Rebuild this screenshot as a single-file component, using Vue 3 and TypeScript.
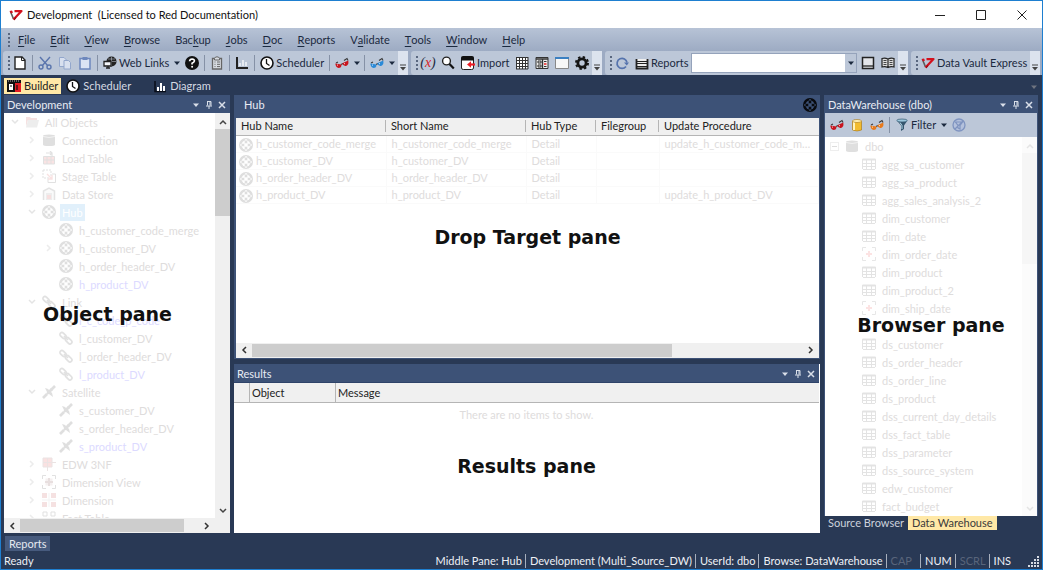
<script setup lang="ts">
import { ref } from 'vue'

interface TreeRow {
  label: string
  icon: string
  level: number
  arrow?: 'open' | 'closed'
  selected?: boolean
  link?: boolean
}

interface HubRow {
  name: string
  type: string
  procedure: string
}

const menus = [
  ['', 'F', 'ile'], ['', 'E', 'dit'], ['', 'V', 'iew'], ['', 'B', 'rowse'],
  ['Bac', 'k', 'up'], ['', 'J', 'obs'], ['', 'D', 'oc'], ['', 'R', 'eports'],
  ['V', 'a', 'lidate'], ['', 'T', 'ools'], ['', 'W', 'indow'], ['', 'H', 'elp'],
]

const objects: TreeRow[] = [
  { label: 'All Objects', icon: 'folder', level: 0, arrow: 'open' },
  { label: 'Connection', icon: 'db', level: 1, arrow: 'closed' },
  { label: 'Load Table', icon: 'load', level: 1, arrow: 'closed' },
  { label: 'Stage Table', icon: 'stage', level: 1, arrow: 'closed' },
  { label: 'Data Store', icon: 'store', level: 1, arrow: 'closed' },
  { label: 'Hub', icon: 'hub', level: 1, arrow: 'open', selected: true },
  { label: 'h_customer_code_merge', icon: 'hub', level: 2 },
  { label: 'h_customer_DV', icon: 'hub', level: 2, arrow: 'closed' },
  { label: 'h_order_header_DV', icon: 'hub', level: 2 },
  { label: 'h_product_DV', icon: 'hub', level: 2, link: true },
  { label: 'Link', icon: 'chain', level: 1, arrow: 'open' },
  { label: 'l_c_code_p_code', icon: 'chain', level: 2, link: true },
  { label: 'l_customer_DV', icon: 'chain', level: 2 },
  { label: 'l_order_header_DV', icon: 'chain', level: 2 },
  { label: 'l_product_DV', icon: 'chain', level: 2, link: true },
  { label: 'Satellite', icon: 'sat', level: 1, arrow: 'open' },
  { label: 's_customer_DV', icon: 'sat', level: 2 },
  { label: 's_order_header_DV', icon: 'sat', level: 2 },
  { label: 's_product_DV', icon: 'sat', level: 2, link: true },
  { label: 'EDW 3NF', icon: 'edw', level: 1, arrow: 'closed' },
  { label: 'Dimension View', icon: 'dimview', level: 1, arrow: 'closed' },
  { label: 'Dimension', icon: 'dim', level: 1, arrow: 'closed' },
  { label: 'Fact Table', icon: 'fact', level: 1, arrow: 'closed' },
]

const tables = [
  'agg_sa_customer', 'agg_sa_product', 'agg_sales_analysis_2', 'dim_customer',
  'dim_date', 'dim_order_date', 'dim_product', 'dim_product_2', 'dim_ship_date', '',
  'ds_customer', 'ds_order_header', 'ds_order_line', 'ds_product',
  'dss_current_day_details', 'dss_fact_table', 'dss_parameter',
  'dss_source_system', 'edw_customer', 'fact_budget',
]
const views = ['dim_order_date', 'dim_ship_date']

const hubs: HubRow[] = [
  { name: 'h_customer_code_merge', type: 'Detail', procedure: 'update_h_customer_code_merge' },
  { name: 'h_customer_DV', type: 'Detail', procedure: '' },
  { name: 'h_order_header_DV', type: 'Detail', procedure: '' },
  { name: 'h_product_DV', type: 'Detail', procedure: 'update_h_product_DV' },
]

const report = ref('')
</script>

<template>
  <svg class="defs" aria-hidden="true">
    <symbol id="logo" viewBox="0 0 14 14">
      <path d="M1.500 3.500L4.500 11" stroke="#5c5c5c" stroke-width="1.600" fill="none" />
      <path d="M.5 3L3 2.500L4 4.500L2 5.500Z" fill="#d3101c" />
      <path d="M5.500 3.200L12.500 3L4.500 11.500" fill="none" stroke="#d3101c" stroke-width="2.200" stroke-linejoin="round" />
      <path d="M5 12L7 9.500" stroke="#8b0b14" stroke-width="1.200" />
    </symbol>
    <symbol id="page" viewBox="0 0 14 14"><path d="M2 1H9L12 4V13H2Z" fill="#fff" stroke="#222" stroke-width="1.4" /><path d="M8.500 1V4.500H12" fill="none" stroke="#222" /></symbol>
    <symbol id="cut" viewBox="0 0 14 14"><g fill="none" stroke="#5a75ad" stroke-width="1.4"><path d="M2 1L10 10M12 1L4 10" /><circle cx="3" cy="11" r="2" /><circle cx="11" cy="11" r="2" /></g></symbol>
    <symbol id="copy" viewBox="0 0 14 14"><g fill="#d8e0ef" stroke="#93a7cc"><path d="M1.500 1.500H6L8 3.500V10.500H1.500Z" /><path d="M6 4.500H10.500L12.500 6.500V13H6Z" /></g></symbol>
    <symbol id="paste" viewBox="0 0 14 14"><path d="M2 2.500H12V13H2Z" fill="#dce4f4" stroke="#6e88bd" stroke-width="1.500" /><path d="M4.500 1H9.500V4H4.500Z" fill="#6e88bd" /></symbol>
    <symbol id="globe" viewBox="0 0 14 14"><circle cx="8.500" cy="5.500" r="5" fill="#222" /><path d="M4 5.500H13M8.500 1V10M5 3H12" stroke="#ccd4e0" stroke-width=".5" fill="none" /><path d="M1 5.500H8V10H1Z" fill="#f4f6fa" stroke="#222" stroke-width="1.300" /><path d="M3 12H7M5 10V12" stroke="#222" stroke-width="1.300" /></symbol>
    <symbol id="help" viewBox="0 0 14 14"><circle cx="7" cy="7" r="7" fill="#111" /><path d="M4.600 5.300Q4.800 3 7.100 3Q9.500 3.100 9.400 5Q9.300 6.200 7.100 7.300V8.500" fill="none" stroke="#fff" stroke-width="1.700" /><circle cx="7.100" cy="10.800" r="1" fill="#fff" /></symbol>
    <symbol id="clip" viewBox="0 0 14 14"><path d="M2.500 2.500H11.500V13H2.500Z" fill="#d8dce2" stroke="#666" stroke-width="1.300" /><path d="M4.500 2.500Q5 .8 7 .8T9.500 2.500V4H4.500Z" fill="#d8dce2" stroke="#666" /><path d="M4.500 6H5.500M7 6H10M4.500 8.300H5.500M7 8.300H10M4.500 10.600H5.500M7 10.600H10" stroke="#666" /></symbol>
    <symbol id="axis" viewBox="0 0 14 14"><path d="M2 1V12H13" fill="none" stroke="#222" stroke-width="2" /><path d="M5 7V10M8 4V10M11 6V10" stroke="#e6ebf2" stroke-width="2" /></symbol>
    <symbol id="clock" viewBox="0 0 14 14"><circle cx="7" cy="7" r="6" fill="#fff" stroke="#111" stroke-width="1.600" /><path d="M6.500 3V7.500L9.500 9.500" fill="none" stroke="#111" stroke-width="1.300" /></symbol>
    <symbol id="glasses" viewBox="0 0 14 14"><path d="M1 7L3 6M6 8.500L8 7.500M9 4.500L12 2.500L13 4.500" fill="none" stroke="#3a3a3a" stroke-width="1.100" /><path d="M.3 7.500L6.500 8.500Q6.500 12 3.500 12Q.8 11.500 .3 7.500Z" fill="currentColor" /><path d="M7.300 7.200L13.300 4.500Q14 9 11 10Q8 10.500 7.300 7.200Z" fill="currentColor" /><path d="M2 9L3 9.200M9 7.900L10 7.400" stroke="#fff" stroke-width=".8" /></symbol>
    <symbol id="search" viewBox="0 0 14 14"><circle cx="5.500" cy="5" r="3.900" fill="#fff" stroke="#222" stroke-width="1.400" /><path d="M8.500 8L12.800 12.500" stroke="#111" stroke-width="2.200" /></symbol>
    <symbol id="import" viewBox="0 0 14 14"><path d="M.5 3V12Q.5 13.500 2.500 13.500H10.500Q12.500 13.500 12.500 12V3Z" fill="#fff" stroke="#222" /><path d="M0 1.500Q0 0 2 0H11Q13 0 13 1.500V4.500H0Z" fill="#111" /><path d="M14 8.500H9" stroke="#ed1c24" stroke-width="2.200" /><path d="M6 8.500L10 5.300V11.700Z" fill="#ed1c24" /></symbol>
    <symbol id="grid" viewBox="0 0 14 14"><path d="M1.500 1.500H12.500V12.500H1.500Z" fill="#fff" /><path d="M1.500 1V13M4.500 1V13M7.500 1V13M10.500 1V13M13 1V13M1 1.500H13M1 4.500H13M1 7.500H13M1 10.500H13M1 13H13" stroke="#333" stroke-width="1" /></symbol>
    <symbol id="table" viewBox="0 0 14 14"><path d="M.5 6.500H13.500M.5 9.500H13.500M1 12.500H13M.5 2V12M4.500 3V12M9.500 3V12M13.500 2V12" stroke="#222" fill="none" /><path d="M.5 1.500H13.500V3.500H.5Z" fill="#222" /></symbol>
    <symbol id="form" viewBox="0 0 14 14"><path d="M1 1.500H13V12.500H1Z" fill="#eee" stroke="#333" /><path d="M1 3H13M7.500 3V12.500" stroke="#333" stroke-width="1.400" /><path d="M3 5H6V7H3ZM3 9H6V11H3Z" fill="none" stroke="#333" /><path d="M9 5.500H11.500M9 10.500H11.500" stroke="#333" /><path d="M9 8H11.500" stroke="#e22" stroke-width="1.500" /></symbol>
    <symbol id="window" viewBox="0 0 14 14"><path d="M.5 1.500H13.500V12.500H.5Z" fill="#f7f7f7" stroke="#888" /><path d="M0 2H14" stroke="#3b80c2" stroke-width="2" /></symbol>
    <symbol id="gear" viewBox="0 0 14 14"><circle cx="7" cy="7" r="4.100" fill="none" stroke="#151515" stroke-width="2.800" /><circle cx="7" cy="7" r="6" fill="none" stroke="#151515" stroke-width="2" stroke-dasharray="2.400 2.310" /></symbol>
    <symbol id="refresh" viewBox="0 0 14 14"><path d="M11 10.500A5 5 0 1 1 12 6.500" fill="none" stroke="#5573ad" stroke-width="1.700" /><path d="M9 6.500H14L11.800 9.500Z" fill="#5573ad" /></symbol>
    <symbol id="report" viewBox="0 0 14 14"><path d="M1.500 3V12.500H12.500V3" fill="#eee" stroke="#222" stroke-width="1.800" /><path d="M2 5.500H12M2 7.500H12M2 10.500H12" stroke="#222" stroke-width="1" /></symbol>
    <symbol id="book" viewBox="0 0 14 14"><path d="M1.500 1.500H12.500V12.500H1.500Z" fill="#e3e5e9" stroke="#222" stroke-width="1.500" /><path d="M1.500 10H12.500" stroke="#222" stroke-width="1.300" /></symbol>
    <symbol id="openbook" viewBox="0 0 14 14"><path d="M7 3Q4 1.500 1 2.500V11Q4 10 7 11.500Q10 10 13 11V2.500Q10 1.500 7 3V11.500" fill="#ddd" stroke="#222" stroke-width="1.200" /><path d="M2.500 4.500H5.500M2.500 6.500H5.500M2.500 8.500H5.500M8.500 4.500H11.500M8.500 6.500H11.500M8.500 8.500H11.500" stroke="#444" /></symbol>
    <symbol id="builder" viewBox="0 0 14 14"><path d="M0 1H14V13H0Z" fill="#111" /><path d="M1 2H13" stroke="#fff" stroke-width=".7" stroke-dasharray="1 1" /><path d="M2 5H6V11H2Z" fill="#fff" /><path d="M8 4H14V13H8Z" fill="#e31b23" /><path d="M3 7H5M10 6V11" stroke="#111" stroke-width="1.200" /></symbol>
    <symbol id="bars" viewBox="0 0 14 14"><path d="M2 2V12.500H13" fill="none" stroke="#080d18" stroke-width="1.500" /><path d="M5 8V12M8 4V12M11 7V12" stroke="#fff" stroke-width="2" /></symbol>
    <symbol id="hub" viewBox="0 0 14 14"><circle cx="7" cy="7" r="7" fill="currentColor" /><circle cx="7" cy="7" r="4.500" class="ring" /><path d="M7 1V13M1 7H13" stroke="currentColor" stroke-width="2.600" /><path d="M5.300 5.300H8.700V8.700H5.300Z" class="hole" /><path d="M7 .8L8.500 2.500H5.500ZM7 13.200L8.500 11.500H5.500ZM.8 7L2.500 5.500V8.500ZM13.200 7L11.500 5.500V8.500Z" class="hole" /></symbol>
    <symbol id="folder" viewBox="0 0 14 14"><path d="M1 2H5L6 3H12V5H3L1 12Z" fill="#b33" /><path d="M3 5H14L12 12.500H1Z" fill="#888" /></symbol>
    <symbol id="db" viewBox="0 0 14 14"><path d="M1 3V11.500Q1 13 7 13T13 11.500V3Q13 1.500 7 1.500T1 3Z" fill="currentColor" /><path d="M1 3.500Q7 5.500 13 3.500" fill="none" stroke="#fff" stroke-width=".6" /></symbol>
    <symbol id="load" viewBox="0 0 14 14"><path d="M1.500 5.500H12.500V13H1.500ZM5 5.500V13M9 5.500V13M1.500 9H12.500" fill="#d44" stroke="#333" /><path d="M4 2H10M8 0L10 2L8 4M10 2V6" fill="none" stroke="#333" stroke-width="1.200" /></symbol>
    <symbol id="stage" viewBox="0 0 14 14"><path d="M1 1H9V9H1Z" fill="none" stroke="#333" stroke-dasharray="2 1" /><path d="M10 5H13.500V13.500H6V10" fill="none" stroke="#333" /><path d="M5 5L10 10M10 6V10H6" fill="none" stroke="#d33" stroke-width="1.300" /></symbol>
    <symbol id="store" viewBox="0 0 14 14"><path d="M1.500 13V4L7 1L12.500 4V13" fill="#ddd" stroke="#444" stroke-width="1.500" /><path d="M4 6H10V13H4Z" fill="#888" /><path d="M5 8H9V12H5Z" fill="#c22" /></symbol>
    <symbol id="chain" viewBox="0 0 14 14"><g fill="none" stroke="#333" stroke-width="1.700"><rect x=".5" y="2.500" width="7" height="4" rx="2" transform="rotate(45 4 4.500)" /><rect x="6" y="7.500" width="7.500" height="4" rx="2" transform="rotate(45 9.500 9.500)" /><path d="M5 5L9 9" /></g></symbol>
    <symbol id="sat" viewBox="0 0 14 14"><path d="M1 13L5 9M9 5L13 1" stroke="#222" stroke-width="2.600" /><path d="M3 3L6 4L10 8L11 12L7 9L4 10L5 7Z M7 5L9 3L11 5L9 7Z" fill="#222" /></symbol>
    <symbol id="edw" viewBox="0 0 14 14"><path d="M1 1H10V10H1Z" fill="#d33" stroke="#744" /><path d="M5.500 1V14M1 5.500H14" stroke="#744" /></symbol>
    <symbol id="dimview" viewBox="0 0 14 14"><path d="M.5 4V.5H4M10 .5H13.500V4M13.500 10V13.500H10M4 13.500H.5V10" fill="none" stroke="#333" /><path d="M3.500 3.500H10.500V10.500H3.500Z" fill="#b99" /><path d="M7 3V11M3 7H11" stroke="#622" stroke-width="2" /></symbol>
    <symbol id="dim" viewBox="0 0 14 14"><path d="M0 0H5V5H0ZM9 0H14V5H9ZM0 9H5V14H0ZM9 9H14V14H9Z" fill="#b33" /><path d="M7 0V14M0 7H14" stroke="#999" stroke-width=".7" /></symbol>
    <symbol id="fact" viewBox="0 0 14 14"><path d="M1 1H5V5H1ZM9 1H13V5H9ZM1 9H5V13H1ZM9 9H13V13H9Z" fill="none" stroke="#333" /></symbol>
    <symbol id="view" viewBox="0 0 14 14"><path d="M.5 4V.5H4M10 .5H13.500V4M13.500 10V13.500H10M4 13.500H.5V10" fill="none" stroke="#444" /><path d="M7 4V10M4 7H10" stroke="#e22" stroke-width="2" /></symbol>
    <symbol id="cylinder" viewBox="0 0 14 14"><path d="M2.500 3V12Q7 14 11.500 12V3Z" fill="#f2bc2d" stroke="#a6720d" stroke-width=".6" /><path d="M4 4V12" stroke="#fff3bc" stroke-width="2" /><ellipse cx="7" cy="3" rx="4.500" ry="1.500" fill="#fff0b3" stroke="#a6720d" stroke-width=".6" /></symbol>
    <symbol id="funnel" viewBox="0 0 14 14"><path d="M2 2.500L6 7.500V13L9 11V7.500L12.500 2.500Z" fill="#35566e" /><ellipse cx="7" cy="2.500" rx="5.300" ry="1.500" fill="#9cc7dd" stroke="#35566e" stroke-width=".7" /><path d="M5 4.500L7 7.500V11" stroke="#b9dcec" fill="none" /></symbol>
    <symbol id="nofilter" viewBox="0 0 14 14"><circle cx="7" cy="7" r="6" fill="#b4c1dc" stroke="#7f94c0" stroke-width="1.300" /><path d="M3.500 4H10.500L8 7.500V11L6 10V7.500ZM3 11L11 3" fill="none" stroke="#7f94c0" stroke-width="1.200" /></symbol>
    <symbol id="down" viewBox="0 0 8 8"><path d="M1 2.500H7L4 6Z" fill="currentColor" /></symbol>
    <symbol id="pin" viewBox="0 0 8 8"><path d="M2 .5H6M2.500 .5V4.500M5 .5V4.500M6 .5V4.500M1 5H7M4 5V8" fill="none" stroke="currentColor" /></symbol>
    <symbol id="close" viewBox="0 0 8 8"><path d="M1 1L7 7M7 1L1 7" stroke="currentColor" stroke-width="1.500" /></symbol>
    <symbol id="chev" viewBox="0 0 8 8"><path d="M2 1L5 4L2 7" fill="none" stroke="currentColor" stroke-width="1.500" /></symbol>
    <symbol id="overflow" viewBox="0 0 8 8"><path d="M1 1H7" stroke="#444" /><path d="M1 3H7L4 6.500Z" fill="#444" /></symbol>
  </svg>

  <div class="app">
    <header class="title">
      <svg class="ic"><use href="#logo" /></svg>
      <h1>Development&nbsp; (Licensed to Red Documentation)</h1>
      <div class="winbtns">
        <button aria-label="Minimize"><svg viewBox="0 0 10 10"><path d="M0 5.500H10" /></svg></button>
        <button aria-label="Maximize"><svg viewBox="0 0 10 10"><path d="M.5 .5H9.500V9.500H.5Z" /></svg></button>
        <button aria-label="Close"><svg viewBox="0 0 10 10"><path d="M.5 .5L9.500 9.500M9.500 .5L.5 9.500" /></svg></button>
      </div>
    </header>

    <nav class="menu">
      <i class="grip"></i>
      <button v-for="m in menus" :key="m.join('')">{{ m[0] }}<u>{{ m[1] }}</u>{{ m[2] }}</button>
    </nav>

    <div class="bars">
      <div class="bar main">
        <i class="grip"></i>
        <button aria-label="New"><svg class="ic"><use href="#page" /></svg></button>
        <i class="sep"></i>
        <button aria-label="Cut"><svg class="ic"><use href="#cut" /></svg></button>
        <button aria-label="Copy"><svg class="ic"><use href="#copy" /></svg></button>
        <button aria-label="Paste"><svg class="ic"><use href="#paste" /></svg></button>
        <i class="sep"></i>
        <button class="text"><svg class="ic"><use href="#globe" /></svg>Web Links</button>
        <button class="drop" aria-label="Web link list"><svg class="sm"><use href="#down" /></svg></button>
        <button aria-label="Help"><svg class="ic"><use href="#help" /></svg></button>
        <i class="sep"></i>
        <button aria-label="Clipboard"><svg class="ic"><use href="#clip" /></svg></button>
        <i class="sep"></i>
        <button aria-label="Chart"><svg class="ic"><use href="#axis" /></svg></button>
        <i class="sep"></i>
        <button class="text"><svg class="ic"><use href="#clock" /></svg>Scheduler</button>
        <i class="sep"></i>
        <button class="red" aria-label="Browse source"><svg class="ic"><use href="#glasses" /></svg></button>
        <button class="drop" aria-label="Source list"><svg class="sm"><use href="#down" /></svg></button>
        <i class="sep"></i>
        <button class="blue" aria-label="Browse warehouse"><svg class="ic"><use href="#glasses" /></svg></button>
        <button class="drop" aria-label="Warehouse list"><svg class="sm"><use href="#down" /></svg></button>
        <button class="flap" aria-label="Toolbar options"><svg class="sm"><use href="#overflow" /></svg></button>
      </div>
      <div class="bar tools">
        <i class="grip"></i>
        <button class="param" aria-label="Parameters">(<em>x</em>)</button>
        <button aria-label="Search"><svg class="ic"><use href="#search" /></svg></button>
        <button class="text"><svg class="ic"><use href="#import" /></svg>Import</button>
        <button aria-label="Grid"><svg class="ic"><use href="#grid" /></svg></button>
        <button aria-label="Form"><svg class="ic"><use href="#form" /></svg></button>
        <button aria-label="Window"><svg class="ic"><use href="#window" /></svg></button>
        <button aria-label="Settings"><svg class="ic"><use href="#gear" /></svg></button>
        <button class="flap" aria-label="Toolbar options"><svg class="sm"><use href="#overflow" /></svg></button>
      </div>
      <div class="bar reports">
        <i class="grip"></i>
        <button aria-label="Refresh"><svg class="ic"><use href="#refresh" /></svg></button>
        <label class="text" for="report"><svg class="ic"><use href="#report" /></svg>Reports</label>
        <span class="combo">
          <select id="report" v-model="report"><option value=""></option></select>
          <svg class="sm"><use href="#down" /></svg>
        </span>
        <button aria-label="Book"><svg class="ic"><use href="#book" /></svg></button>
        <button aria-label="Open book"><svg class="ic"><use href="#openbook" /></svg></button>
        <button class="flap" aria-label="Toolbar options"><svg class="sm"><use href="#overflow" /></svg></button>
      </div>
      <div class="bar vault">
        <i class="grip"></i>
        <button class="text"><svg class="ic"><use href="#logo" /></svg>Data Vault Express</button>
        <button class="flap" aria-label="Toolbar options"><svg class="sm"><use href="#overflow" /></svg></button>
      </div>
    </div>

    <nav class="tabs">
      <button class="active"><svg class="ic"><use href="#builder" /></svg>Builder</button>
      <button class="sched"><svg class="ic"><use href="#clock" /></svg>Scheduler</button>
      <button><svg class="ic"><use href="#bars" /></svg>Diagram</button>
      <svg class="sm more"><use href="#down" /></svg>
    </nav>

    <main class="work">
      <section class="pane left">
        <div class="head">
          <h2>Development</h2>
          <button aria-label="Menu"><svg class="sm"><use href="#down" /></svg></button>
          <button aria-label="Pin"><svg class="sm"><use href="#pin" /></svg></button>
          <button aria-label="Close"><svg class="sm"><use href="#close" /></svg></button>
        </div>
        <div class="scrollarea">
          <div class="body">
            <ul class="tree">
              <li v-for="o in objects" :key="o.label" :class="['l' + o.level, { link: o.link, sel: o.selected }]">
                <span class="arrow"><svg v-if="o.arrow" class="sm" :class="o.arrow"><use href="#chev" /></svg></span>
                <svg class="ic"><use :href="'#' + o.icon" /></svg>
                <span class="name">{{ o.label }}</span>
              </li>
            </ul>
            <strong class="caption">Object pane</strong>
          </div>
          <div class="vscroll">
            <svg class="sm up"><use href="#chev" /></svg><i class="thumb"></i><svg class="sm open"><use href="#chev" /></svg>
          </div>
        </div>
        <div class="hscroll"><svg class="sm back"><use href="#chev" /></svg><i class="thumb"></i><svg class="sm"><use href="#chev" /></svg></div>
      </section>

      <div class="middle">
        <section class="pane hubpane">
          <div class="head">
            <h2>Hub</h2>
            <svg class="ic dark"><use href="#hub" /></svg>
          </div>
          <div class="body">
            <table>
              <colgroup><col class="c1" /><col class="c2" /><col class="c3" /><col class="c4" /><col /></colgroup>
              <thead><tr><th>Hub Name</th><th>Short Name</th><th>Hub Type</th><th>Filegroup</th><th>Update Procedure</th></tr></thead>
              <tbody>
                <tr v-for="h in hubs" :key="h.name">
                  <td class="first"><svg class="ic"><use href="#hub" /></svg>{{ h.name }}</td>
                  <td>{{ h.name }}</td><td>{{ h.type }}</td><td></td><td>{{ h.procedure }}</td>
                </tr>
              </tbody>
            </table>
            <strong class="caption">Drop Target pane</strong>
          </div>
          <div class="hscroll"><svg class="sm back"><use href="#chev" /></svg><i class="thumb"></i><svg class="sm"><use href="#chev" /></svg></div>
        </section>

        <section class="pane results">
          <div class="head">
            <h2>Results</h2>
            <button aria-label="Menu"><svg class="sm"><use href="#down" /></svg></button>
            <button aria-label="Pin"><svg class="sm"><use href="#pin" /></svg></button>
            <button aria-label="Close"><svg class="sm"><use href="#close" /></svg></button>
          </div>
          <table>
            <colgroup><col class="r1" /><col class="r2" /><col /></colgroup>
            <thead><tr><th></th><th>Object</th><th>Message</th></tr></thead>
          </table>
          <div class="body">
            <p>There are no items to show.</p>
            <strong class="caption">Results pane</strong>
          </div>
        </section>
      </div>

      <div class="right">
        <section class="pane browser">
          <div class="head">
            <h2>DataWarehouse (dbo)</h2>
            <button aria-label="Menu"><svg class="sm"><use href="#down" /></svg></button>
            <button aria-label="Pin"><svg class="sm"><use href="#pin" /></svg></button>
            <button aria-label="Close"><svg class="sm"><use href="#close" /></svg></button>
          </div>
          <div class="filterbar">
            <button class="red" aria-label="Source"><svg class="ic"><use href="#glasses" /></svg></button>
            <button aria-label="Database"><svg class="ic"><use href="#cylinder" /></svg></button>
            <button class="orange" aria-label="Browse"><svg class="ic"><use href="#glasses" /></svg></button>
            <i class="sep"></i>
            <button class="text"><svg class="ic"><use href="#funnel" /></svg>Filter</button>
            <button class="drop" aria-label="Filter list"><svg class="sm"><use href="#down" /></svg></button>
            <button aria-label="Clear filter"><svg class="ic"><use href="#nofilter" /></svg></button>
          </div>
          <div class="scrollarea">
            <div class="body">
              <ul class="tree">
                <li class="root"><i class="minus"></i><svg class="ic"><use href="#db" /></svg><span class="name">dbo</span></li>
                <li v-for="t in tables" :key="t" class="leaf">
                  <template v-if="t">
                    <svg class="ic"><use :href="views.includes(t) ? '#view' : '#table'" /></svg>
                    <span class="name">{{ t }}</span>
                  </template>
                </li>
              </ul>
            </div>
            <div class="vscroll faint">
              <svg class="sm up"><use href="#chev" /></svg><i class="thumb"></i><svg class="sm open"><use href="#chev" /></svg>
            </div>
            <strong class="caption">Browser pane</strong>
          </div>
        </section>
        <nav class="subtabs"><button>Source Browser</button><button class="active">Data Warehouse</button></nav>
      </div>
    </main>

    <div class="dock"><button>Reports</button></div>

    <footer class="status">
      <span class="ready">Ready</span>
      <span>Middle Pane: Hub</span>
      <span>Development (Multi_Source_DW)</span>
      <span>UserId: dbo</span>
      <span>Browse: DataWarehouse</span>
      <span class="off cap">CAP</span>
      <span>NUM</span>
      <span class="off">SCRL</span>
      <span>INS</span>
      <svg class="size" viewBox="0 0 12 12"><path d="M9 1h2v2h-2zM6 4h2v2h-2zM9 4h2v2h-2zM3 7h2v2h-2zM6 7h2v2h-2zM9 7h2v2h-2zM0 10h2v2h-2zM3 10h2v2h-2zM6 10h2v2h-2zM9 10h2v2h-2z" fill="#d5dae3" /></svg>
    </footer>
  </div>
</template>

<style>
body { margin: 0; }
</style>

<style scoped>
* { box-sizing: border-box; }
.defs { position: absolute; width: 0; height: 0; }
.app {
  height: 100vh;
  min-height: 400px;
  display: flex;
  flex-direction: column;
  background: #293955;
  border: 1px solid #1e7fd0;
  font: 11px/16px Lato, "Open Sans", sans-serif;
  font-variant-ligatures: none;
  color: #1b293e;
  overflow: hidden;
  white-space: nowrap;
}
button { font: inherit; color: inherit; background: none; border: 0; padding: 0; margin: 0; display: flex; align-items: center; justify-content: center; }
h1, h2, p, ul { margin: 0; padding: 0; font: inherit; }
ul { list-style: none; }
.ic { width: 14px; height: 14px; flex: none; }
.sm { width: 8px; height: 8px; flex: none; }
.red { color: #c8141e; }
.blue { color: #2a8ad8; }
.orange { color: #e8791b; }
.ring { fill: var(--ring, #fff); }
.hole { fill: var(--ring, #fff); }

.title { flex: none; height: 27px; background: #fff; display: flex; align-items: center; padding-left: 8px; gap: 4px; color: #111; }
.winbtns { margin-left: auto; display: flex; }
.winbtns button { width: 41px; height: 26px; }
.winbtns svg { width: 10px; height: 10px; fill: none; stroke: #222; }

.menu { flex: none; height: 23px; display: flex; align-items: center; padding-left: 4px; background: linear-gradient(#b7c3d6, #9dabc3); }
.menu button { padding: 0 7px 0 8px; }
.menu u { text-underline-offset: 2px; }
.grip { width: 3px; height: 14px; flex: none; margin-left: 2px; background: repeating-linear-gradient(#59677f 0 2px, transparent 2px 4px) center / 2px 100% no-repeat; }

.bars { flex: none; height: 24px; display: flex; gap: 3px; padding: 0 4px 0 2px; background: #9dabc3; }
.bar { display: flex; align-items: center; background: #bcc7d8; border-radius: 3px 0 0 3px; padding-left: 2px; }
.bar button { width: 20px; height: 20px; flex: none; }
.bar .text { display: flex; align-items: center; width: auto; gap: 2px; padding: 0 3px; }
.bar .drop, .filterbar .drop { width: 10px; }
.bar .flap { width: 10px; height: 24px; margin-left: auto; background: #dce3ee; align-items: flex-end; padding-bottom: 3px; }
.sep { width: 1px; height: 16px; flex: none; margin: 0 2px; background: #8591a6; }
.main { width: 405px; }
.tools { width: 191px; }
.vault { width: 127px; }
.reports { flex: 1; min-width: 240px; }
.bar .param { font: italic 14px/16px "Liberation Serif", serif; }
.param em { color: #d81e28; }
.combo { position: relative; flex: 1; height: 20px; margin-right: 1px; }
.combo select { appearance: none; width: 100%; height: 100%; border: 1px solid #8c9bb5; border-right: 12px solid #bcc7d8; border-radius: 0; background: #fff; font: inherit; outline: 1px solid #95a3bb; outline-offset: -1px; }
.combo svg { position: absolute; right: 2px; top: 6px; pointer-events: none; }

.tabs { flex: none; height: 20px; padding: 3px 4px 1px 3px; display: flex; color: #d5dae3; }
.tabs button { gap: 3px; padding: 0 5px; }
.tabs .active { background: #ffe8a6; color: #222; gap: 3px; padding: 0 3px; }
.tabs .sched { margin-right: 12px; }
.more { margin: 5px 0 0 auto; color: #6f7480; }

.work { flex: 1; min-height: 0; display: flex; gap: 4px; padding: 0 4px 0 3px; }
.pane { display: flex; flex-direction: column; min-height: 0; background: #fff; }
.head { flex: none; height: 17px; display: flex; align-items: center; background: #3d5277; color: #e8ecf4; padding: 1px 2px 0 3px; }
.head h2 { flex: 1; }
.head button { width: 13px; height: 14px; color: #d9dfe9; }
.left { flex: none; width: 226px; border: solid #3d5277; border-width: 1px 0 0 0; }
.scrollarea { flex: 1; min-height: 0; display: flex; position: relative; }
.body { flex: 1; min-width: 0; min-height: 0; position: relative; overflow: hidden; }
.caption { position: absolute; left: 50%; top: 50%; transform: translate(-50%, -50%); font: bold 19px/24px "DejaVu Sans", sans-serif; color: #111; padding-bottom: 4px; }
.left .caption { padding-right: 4px; }

.tree { color: #dedcdc; }
.tree li { height: 18px; display: flex; align-items: center; gap: 4px; }
.tree .name { padding: 0 2px; line-height: 17px; }
.tree .ic { opacity: .14; color: #222; }
.tree .arrow { width: 10px; display: flex; color: #e4e4e4; }
.tree .closed { opacity: .7; }
.l0 { padding-left: 7px; }
.l1 { padding-left: 24px; }
.l2 { padding-left: 41px; }
.tree .link { color: #dcdaff; }
.sel .name { background: #e1f0fb; color: #fff; }
.open { transform: rotate(90deg); }
.up { transform: rotate(-90deg); }
.back { transform: rotate(180deg); }

.vscroll { flex: none; width: 15px; display: flex; flex-direction: column; align-items: center; padding: 5px 0 3px; background: #f0f0f0; color: #444; }
.vscroll .thumb { width: 100%; height: 22%; margin: 3px 0 auto; background: #cdcdcd; }
.hscroll { flex: none; height: 15px; display: flex; align-items: center; padding: 0 4px; background: #f0f0f0; color: #333; }
.hscroll .thumb { height: 13px; width: 73%; margin: 0 auto 0 4px; background: #cdcdcd; }
.left .hscroll { padding-right: 19px; }
.left .hscroll .thumb { width: 81%; }

.middle { flex: 1; min-width: 0; display: flex; flex-direction: column; gap: 5px; }
.hubpane { flex: 1; border: solid #3d5277; border-width: 0 1px 1px 2px; }
.hubpane .head { height: 23px; padding: 0 2px 4px 8px; }
.hubpane .caption { top: 54%; }
.dark { color: #080a0e; --ring: #3d5277; }
table { width: 100%; border-collapse: collapse; table-layout: fixed; color: #dedcdc; }
th { font-weight: normal; text-align: left; color: #222; background: linear-gradient(90deg, transparent calc(100% - 1px), #b5b5b5 0) 0 2px / 100% 12px no-repeat #f0f0f0; padding: 0 5px; height: 17px; line-height: 16px; border-bottom: 1px solid #b5b5b5; }
th:last-child { background: #f0f0f0; }
td { height: 17px; padding: 0 5px; line-height: 16px; overflow: hidden; text-overflow: ellipsis; border: 1px solid #fafafa; border-left: 0; }
td.first { padding-left: 3px; }
td .ic { color: #dedede; vertical-align: middle; margin-right: 3px; }
.c1 { width: 150px; } .c2 { width: 140px; } .c3 { width: 70px; } .c4 { width: 63px; }
.r1 { width: 16px; } .r2 { width: 86px; }
.results { flex: none; height: 38.6%; border-right: 1px solid #fff; }
.results th { height: 20px; padding: 0 2px; background-size: 100% 100%; background-position: 0 0; }
.results .head { height: 19px; padding-top: 3px; border-bottom: 1px solid #2e4369; }
.results p { text-align: center; color: #dedcdc; padding-top: 4px; }

.right { flex: none; width: 214px; display: flex; flex-direction: column; padding-bottom: 3px; }
.browser { flex: 1; border: solid #3d5277; border-width: 1px 1px 0; }
.browser .head { padding-left: 3px; }
.filterbar { flex: none; height: 24px; display: flex; align-items: center; background: #bcc7d8; padding-left: 2px; }
.filterbar button { height: 20px; width: 20px; }
.filterbar .text { width: auto; gap: 2px; padding: 0 3px; }
.tree .root { padding-left: 5px; gap: 6px; }
.minus { width: 9px; height: 9px; border: 1px solid #eee; background: linear-gradient(#ddd, #ddd) center / 5px 1px no-repeat; }
.tree .root .name { padding-left: 0; }
.leaf { padding-left: 37px; }
.tree .leaf .ic { opacity: .12; }
.faint { background: #fbfbfb; color: #e4e4e4; }
.faint .thumb { background: #f6f6f6; height: 30%; }
.subtabs { flex: none; height: 14px; display: flex; color: #ccd2dc; line-height: 14px; }
.subtabs button { padding: 0 4px; }
.subtabs .active { background: #ffe8a6; color: #3b3a3a; }

.dock { flex: none; height: 20px; padding: 3px 4px 2px 4px; }
.dock button { height: 15px; padding: 0 4px; background: #465a7d; color: #e5e9f1; }
.status { flex: none; height: 16px; display: flex; align-items: center; padding: 0 2px 0 3px; color: #edf0f5; }
.status span { padding: 0 3px 0 4px; border-right: 1px solid #a7afbd; line-height: 14px; }
.status .ready { margin-right: auto; padding-left: 0; border: 0; }
.status .off { color: #59657b; }
.status .cap { padding-right: 8px; }
.status span:last-of-type { border: 0; margin-right: 14px; }
.size { width: 12px; height: 12px; }
</style>
